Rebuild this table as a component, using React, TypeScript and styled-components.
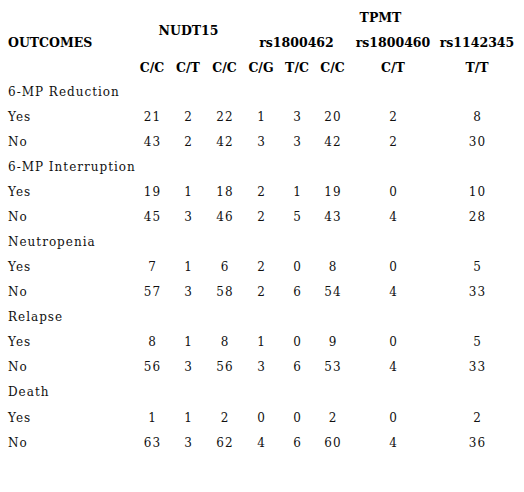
import React from "react";
import styled, { createGlobalStyle } from "styled-components";

const GlobalStyle = createGlobalStyle`
  html, body {
    margin: 0;
    padding: 0;
    background: #ffffff;
  }
`;

type Group = {
  title: string;
  yes: number[];
  no: number[];
};

const groups: Group[] = [
  { title: "6-MP Reduction", yes: [21, 2, 22, 1, 3, 20, 2, 8], no: [43, 2, 42, 3, 3, 42, 2, 30] },
  { title: "6-MP Interruption", yes: [19, 1, 18, 2, 1, 19, 0, 10], no: [45, 3, 46, 2, 5, 43, 4, 28] },
  { title: "Neutropenia", yes: [7, 1, 6, 2, 0, 8, 0, 5], no: [57, 3, 58, 2, 6, 54, 4, 33] },
  { title: "Relapse", yes: [8, 1, 8, 1, 0, 9, 0, 5], no: [56, 3, 56, 3, 6, 53, 4, 33] },
  { title: "Death", yes: [1, 1, 2, 0, 0, 2, 0, 2], no: [63, 3, 62, 4, 6, 60, 4, 36] },
];

const genotypes = ["C/C", "C/T", "C/C", "C/G", "T/C", "C/C", "C/T", "T/T"];

const App = () => {
  return (
    <Page>
      <GlobalStyle />
      <Table>
        <HeadCell col="1" row="1 / span 3" align="left">OUTCOMES</HeadCell>
        <HeadCell col="2 / span 3" row="1 / span 2">NUDT15</HeadCell>
        <HeadCell col="5 / span 5" row="1">TPMT</HeadCell>
        <HeadCell col="5 / span 3" row="2">rs1800462</HeadCell>
        <HeadCell col="8" row="2">rs1800460</HeadCell>
        <HeadCell col="9" row="2">rs1142345</HeadCell>
        {genotypes.map((g, i) => (
          <HeadCell key={i} col={String(i + 2)} row="3">
            {g}
          </HeadCell>
        ))}

        {groups.map((grp) => (
          <React.Fragment key={grp.title}>
            <GroupLabel>{grp.title}</GroupLabel>
            <RowLabel>Yes</RowLabel>
            {grp.yes.map((n, i) => (
              <NumCell key={"y" + i}>{n}</NumCell>
            ))}
            <RowLabel>No</RowLabel>
            {grp.no.map((n, i) => (
              <NumCell key={"n" + i}>{n}</NumCell>
            ))}
          </React.Fragment>
        ))}
      </Table>
    </Page>
  );
};

export default App;

const Page = styled.div`
  width: 524px;
  height: 492px;
  box-sizing: border-box;
  padding: 5px 0 0 8px;
  background: #ffffff;
  color: #000000;
`;

const Table = styled.div`
  display: grid;
  grid-template-columns: 126px 36px 36px 37px 36px 36px 35px 86px 82px;
  grid-template-rows: 25px 25px 24px;
  grid-auto-rows: 25.08px;
`;

const HeadCell = styled.div<{ col: string; row: string; align?: string }>`
  grid-column: ${(p) => p.col};
  grid-row: ${(p) => p.row};
  display: flex;
  align-items: center;
  justify-content: ${(p) => (p.align === "left" ? "flex-start" : "center")};
  font-family: "DejaVu Serif", "Liberation Serif", serif;
  font-weight: bold;
  font-size: 12.5px;
  white-space: nowrap;
`;

const BodyText = styled.div`
  display: flex;
  align-items: center;
  font-family: "DejaVu Serif", "Liberation Serif", serif;
  font-size: 12px;
  letter-spacing: 1px;
  white-space: nowrap;
  color: #111111;
`;

const GroupLabel = styled(BodyText)`
  grid-column: 1 / -1;
`;

const RowLabel = styled(BodyText)`
  grid-column: 1;
`;

const NumCell = styled(BodyText)`
  justify-content: center;
  padding-left: 1px;
`;
